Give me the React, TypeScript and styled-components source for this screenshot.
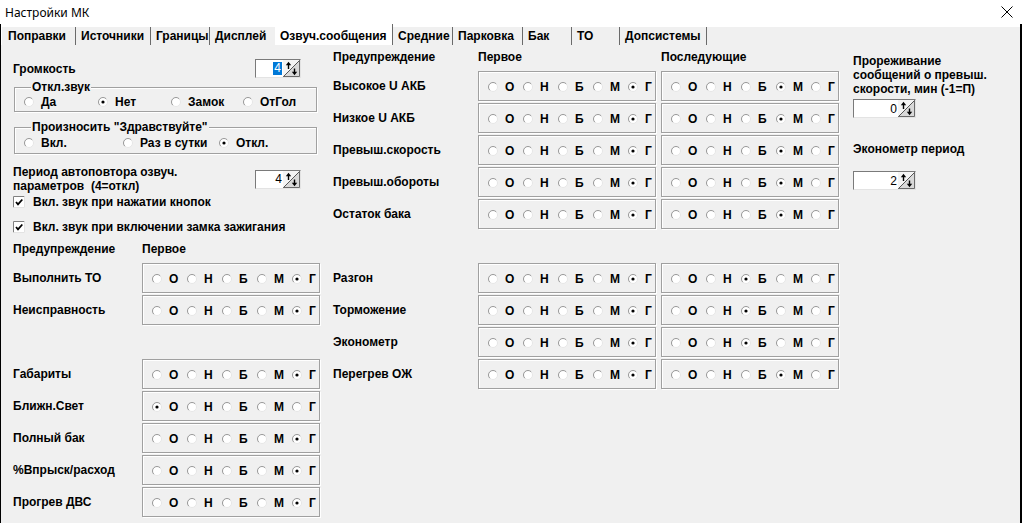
import React from "react";
import styled, { createGlobalStyle } from "styled-components";

const GlobalStyle = createGlobalStyle`
  html, body {
    margin: 0;
    padding: 0;
    background: #f0f0f0;
  }
  body {
    font-family: "Liberation Sans", Arial, sans-serif;
    color: #000;
  }
  * {
    box-sizing: border-box;
  }
`;

const Window = styled.div`
  width: 1023px;
  height: 523px;
  display: flex;
  flex-direction: column;
  overflow: hidden;
  background: #fff;
`;

const TitleBar = styled.div`
  height: 24px;
  flex: none;
  display: flex;
  align-items: center;
  justify-content: space-between;
  padding: 0 10px 0 5px;
  background: #fff;
  font-family: "Noto Sans", "Open Sans", sans-serif;
  font-size: 12px;
`;

const Frame = styled.div`
  flex: 1;
  display: flex;
  flex-direction: column;
  min-height: 0;
  border-left: 1px solid #000;
  border-right: 2px solid #000;
  margin-right: 1px;
`;

const TabStrip = styled.div`
  height: 21px;
  flex: none;
  display: flex;
  align-items: flex-end;
  padding-left: 2px;
  background: linear-gradient(#fff 0 3px, #f0f0f0 3px);
  box-shadow: inset 1px 0 0 #fff;
`;

const Tab = styled.div<{ $w: number; $active?: boolean; $noSep?: boolean }>`
  width: ${(p) => p.$w}px;
  height: ${(p) => (p.$active ? 21 : 18)}px;
  flex: none;
  display: flex;
  align-items: center;
  padding: ${(p) => (p.$active ? "3px 0 0 5px" : "0 0 0 5px")};
  background: ${(p) => (p.$active ? "#fff" : "#f0f0f0")};
  border-right: 1px solid ${(p) => (p.$noSep ? "transparent" : "#6a6a6a")};
  font-size: 12px;
  font-weight: bold;
  white-space: nowrap;
`;

const Body = styled.div`
  flex: 1;
  display: grid;
  grid-template-columns: 329px 516px 1fr;
  background: #f0f0f0;
  font-size: 12px;
  font-weight: bold;
`;

const LeftCol = styled.div`
  padding-left: 12px;
  display: flex;
  flex-direction: column;
`;

const MidCol = styled.div`
  padding: 5px 0 0 3px;
  display: flex;
  flex-direction: column;
`;

const RightCol = styled.div`
  padding: 9px 0 0 7px;
  display: flex;
  flex-direction: column;
  align-items: flex-start;
`;

const SpinRow = styled.div<{ $mt: number }>`
  width: 288px;
  margin-top: ${(p) => p.$mt}px;
  display: flex;
  align-items: center;
  justify-content: space-between;
`;

const SpinBox = styled.div<{ $w: number; $mt?: number }>`
  width: ${(p) => p.$w}px;
  height: 19px;
  margin-top: ${(p) => p.$mt ?? 0}px;
  flex: none;
  display: flex;
  background: #fff;
  border: 1px solid;
  border-color: #7a7a7a #e3e3e3 #e3e3e3 #7a7a7a;
`;

const SpinValue = styled.div`
  flex: 1;
  display: flex;
  justify-content: flex-end;
  align-items: center;
  padding-right: 1px;
  font-weight: normal;
  font-size: 12px;
`;

const Selected = styled.span`
  background: #0078d7;
  color: #fff;
  line-height: 13px;
  padding: 0 1px;
`;

const Group = styled.fieldset<{ $mt: number; $pt: number; $pb: number }>`
  width: 303px;
  margin: ${(p) => p.$mt}px 0 0 1px;
  padding: ${(p) => p.$pt}px 0 ${(p) => p.$pb}px 9px;
  min-width: 0;
  border: 1px solid #a0a0a0;
  box-shadow: inset 1px 1px 0 #fff, 1px 1px 0 #fff;
`;

const Legend = styled.legend`
  margin-left: 7px;
  padding: 0 1px;
  line-height: 14px;
  background: #f0f0f0;
`;

const ChoiceRow = styled.div`
  display: flex;
  height: 14px;
  align-items: center;
`;

const Choice = styled.label<{ $w?: number }>`
  width: ${(p) => (p.$w ? `${p.$w}px` : "auto")};
  flex: none;
  display: flex;
  align-items: center;
  gap: 7px;
  white-space: nowrap;
`;

const PeriodRow = styled.div`
  width: 288px;
  margin-top: 11px;
  display: flex;
  align-items: center;
  justify-content: space-between;
`;

const TextBlock = styled.div`
  line-height: 14px;
`;

const CheckRow = styled.div<{ $mt: number }>`
  height: 16px;
  margin-top: ${(p) => p.$mt}px;
  display: flex;
  align-items: center;
  gap: 8px;
`;

const HeaderRow = styled.div<{ $cols: string; $mt: number }>`
  height: 14px;
  margin-top: ${(p) => p.$mt}px;
  display: grid;
  grid-template-columns: ${(p) => p.$cols};
  column-gap: 5px;
  line-height: 14px;
`;

const Rows = styled.div<{ $mt: number }>`
  margin-top: ${(p) => p.$mt}px;
  display: flex;
  flex-direction: column;
  gap: 2px;
`;

const OptionRow = styled.div<{ $label: number }>`
  height: 30px;
  display: grid;
  grid-template-columns: ${(p) => p.$label}px 178px 178px;
  column-gap: 5px;
  align-items: center;
`;

const Spacer = styled.div`
  height: 30px;
`;

const OptBox = styled.div`
  height: 30px;
  display: flex;
  align-items: center;
  padding: 1px 0 0 9px;
  border: 1px solid #a0a0a0;
  box-shadow: inset 1px 1px 0 #fff, 1px 1px 0 #fff;
`;

const NoteLine = styled.div<{ $mt?: number }>`
  margin-top: ${(p) => p.$mt ?? 0}px;
  line-height: 14px;
`;

const CloseIcon = () => (
  <svg width="12" height="12" viewBox="0 0 12 12">
    <path d="M0.5 0.5 L11.5 11.5 M11.5 0.5 L0.5 11.5" stroke="#000" strokeWidth="1" />
  </svg>
);

const Radio = ({ on }: { on?: boolean }) => (
  <svg width="10" height="10" viewBox="0 0 10 10" style={{ flex: "none" }}>
    <circle cx="5" cy="5" r="4.5" fill="#fff" stroke="#e6e6e6" />
    <path d="M8.2 1.8 A4.5 4.5 0 0 0 1.8 8.2" fill="none" stroke="#9a9a9a" />
    {on && <circle cx="5" cy="5" r="1.6" fill="#000" />}
  </svg>
);

const CheckBox = () => (
  <svg width="12" height="12" viewBox="0 0 12 12" style={{ flex: "none" }}>
    <rect x="0" y="0" width="12" height="12" fill="#fff" />
    <path d="M0.5 11.5 V0.5 H11.5" fill="none" stroke="#808080" />
    <path d="M11.5 0.5 V11.5 H0.5" fill="none" stroke="#e3e3e3" />
    <path d="M3 6 L5 8.3 L9.3 3.5" fill="none" stroke="#000" strokeWidth="1.8" />
  </svg>
);

const SpinArrows = () => (
  <svg width="17" height="17" viewBox="0 0 17 17" style={{ flex: "none" }}>
    <rect width="17" height="17" fill="#f4f4f4" />
    <path d="M0 17 L17 0 L17 17 Z" fill="#d9d9d9" />
    <path d="M0 17 L17 0" stroke="#555" strokeWidth="1" />
    <path d="M16.5 0 V16.5 H0" fill="none" stroke="#6a6a6a" />
    <path d="M5.5 9 V4" stroke="#000" strokeWidth="1.4" />
    <path d="M2.8 5.2 L5.5 1.8 L8.2 5.2 Z" fill="#000" />
    <path d="M11.5 8.5 V13" stroke="#000" strokeWidth="1.4" />
    <path d="M8.8 11.8 L11.5 15.2 L14.2 11.8 Z" fill="#000" />
  </svg>
);

const Spin = ({ w, value, selected, mt }: { w: number; value: string; selected?: boolean; mt?: number }) => (
  <SpinBox $w={w} $mt={mt}>
    <SpinValue>{selected ? <Selected>{value}</Selected> : value}</SpinValue>
    <SpinArrows />
  </SpinBox>
);

const LETTERS = ["О", "Н", "Б", "М", "Г"];

const Options = ({ sel }: { sel: number }) => (
  <OptBox>
    {LETTERS.map((l, i) => (
      <Choice key={l} $w={35}>
        <Radio on={i === sel} />
        {l}
      </Choice>
    ))}
  </OptBox>
);

type Row = { label: string; first: number; next?: number } | null;

const leftRows: Row[] = [
  { label: "Выполнить ТО", first: 4 },
  { label: "Неисправность", first: 4 },
  null,
  { label: "Габариты", first: 4 },
  { label: "Ближн.Свет", first: 0 },
  { label: "Полный бак", first: 4 },
  { label: "%Впрыск/расход", first: 4 },
  { label: "Прогрев ДВС", first: 4 },
];

const midRows: Row[] = [
  { label: "Высокое U АКБ", first: 4, next: 3 },
  { label: "Низкое U АКБ", first: 4, next: 3 },
  { label: "Превыш.скорость", first: 4, next: 3 },
  { label: "Превыш.обороты", first: 4, next: 3 },
  { label: "Остаток бака", first: 4, next: 3 },
  null,
  { label: "Разгон", first: 4, next: 2 },
  { label: "Торможение", first: 4, next: 2 },
  { label: "Эконометр", first: 4, next: 2 },
  { label: "Перегрев ОЖ", first: 4, next: 3 },
];

const tabs = [
  { name: "Поправки", w: 73 },
  { name: "Источники", w: 75 },
  { name: "Границы", w: 59 },
  { name: "Дисплей", w: 65 },
  { name: "Озвуч.сообщения", w: 118 },
  { name: "Средние", w: 60 },
  { name: "Парковка", w: 70 },
  { name: "Бак", w: 49 },
  { name: "ТО", w: 48 },
  { name: "Допсистемы", w: 87 },
];
const ACTIVE = 4;

export default function App() {
  return (
    <Window>
      <GlobalStyle />
      <TitleBar>
        <span>Настройки МК</span>
        <CloseIcon />
      </TitleBar>
      <Frame>
        <TabStrip>
          {tabs.map((t, i) => (
            <Tab key={t.name} $w={t.w} $active={i === ACTIVE} $noSep={i === ACTIVE - 1}>
              {t.name}
            </Tab>
          ))}
        </TabStrip>
        <Body>
          <LeftCol>
            <SpinRow $mt={14}>
              <span>Громкость</span>
              <Spin w={46} value="4" selected />
            </SpinRow>
            <Group $mt={2} $pt={1} $pb={2}>
              <Legend>Откл.звук</Legend>
              <ChoiceRow>
                <Choice $w={74}>
                  <Radio />
                  Да
                </Choice>
                <Choice $w={73}>
                  <Radio on />
                  Нет
                </Choice>
                <Choice $w={72}>
                  <Radio />
                  Замок
                </Choice>
                <Choice>
                  <Radio />
                  ОтГол
                </Choice>
              </ChoiceRow>
            </Group>
            <Group $mt={8} $pt={2} $pb={3}>
              <Legend>Произносить "Здравствуйте"</Legend>
              <ChoiceRow>
                <Choice $w={99}>
                  <Radio />
                  Вкл.
                </Choice>
                <Choice $w={96}>
                  <Radio />
                  Раз в сутки
                </Choice>
                <Choice>
                  <Radio on />
                  Откл.
                </Choice>
              </ChoiceRow>
            </Group>
            <PeriodRow>
              <TextBlock>
                Период автоповтора озвуч.
                <br />
                параметров&nbsp; (4=откл)
              </TextBlock>
              <Spin w={46} value="4" />
            </PeriodRow>
            <CheckRow $mt={1}>
              <CheckBox />
              Вкл. звук при нажатии кнопок
            </CheckRow>
            <CheckRow $mt={9}>
              <CheckBox />
              Вкл. звук при включении замка зажигания
            </CheckRow>
            <HeaderRow $cols="124px 178px" $mt={7}>
              <span>Предупреждение</span>
              <span>Первое</span>
            </HeaderRow>
            <Rows $mt={7}>
              {leftRows.map((r, i) =>
                r ? (
                  <OptionRow key={i} $label={124}>
                    <span>{r.label}</span>
                    <Options sel={r.first} />
                  </OptionRow>
                ) : (
                  <Spacer key={i} />
                )
              )}
            </Rows>
          </LeftCol>
          <MidCol>
            <HeaderRow $cols="140px 178px 178px" $mt={0}>
              <span>Предупреждение</span>
              <span>Первое</span>
              <span>Последующие</span>
            </HeaderRow>
            <Rows $mt={7}>
              {midRows.map((r, i) =>
                r ? (
                  <OptionRow key={i} $label={140}>
                    <span>{r.label}</span>
                    <Options sel={r.first} />
                    <Options sel={r.next ?? 0} />
                  </OptionRow>
                ) : (
                  <Spacer key={i} />
                )
              )}
            </Rows>
          </MidCol>
          <RightCol>
            <NoteLine>Прореживание</NoteLine>
            <NoteLine>сообщений о превыш.</NoteLine>
            <NoteLine>скорости, мин (-1=П)</NoteLine>
            <Spin w={63} value="0" mt={3} />
            <NoteLine $mt={24}>Эконометр период</NoteLine>
            <Spin w={63} value="2" mt={15} />
          </RightCol>
        </Body>
      </Frame>
    </Window>
  );
}
